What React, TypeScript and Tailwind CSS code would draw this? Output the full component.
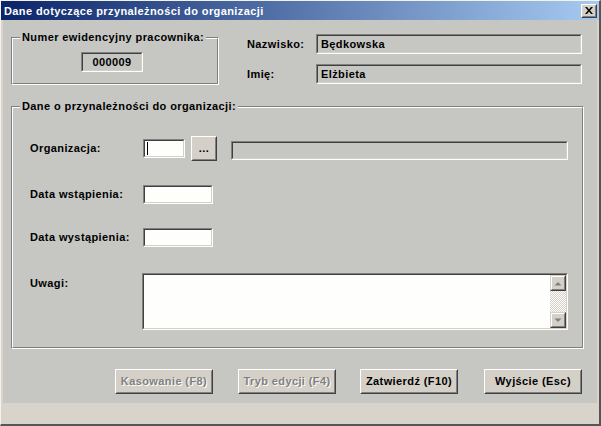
import React from "react";

const FONT = "font-['Liberation_Sans',Arial,sans-serif] font-bold text-[11px] tracking-[0.4px]";

function Sunken({
  w,
  h,
  bg = "bg-[#fefefc]",
  className = "",
  children,
}: {
  w: string;
  h: string;
  bg?: string;
  className?: string;
  children?: React.ReactNode;
}) {
  return (
    <div
      className={`${w} ${h} ${className} shrink-0 border border-t-[#808080] border-l-[#808080] border-b-[#ffffff] border-r-[#ffffff]`}
    >
      <div
        className={`w-full h-full border border-t-[#404040] border-l-[#404040] border-b-[#d4d0c8] border-r-[#d4d0c8] ${bg} flex items-center`}
      >
        {children}
      </div>
    </div>
  );
}

function Etched({
  w,
  h,
  legend,
  legendLeft,
  className = "",
  children,
}: {
  w: string;
  h: string;
  legend: string;
  legendLeft: string;
  className?: string;
  children?: React.ReactNode;
}) {
  return (
    <div
      className={`${w} ${h} ${className} relative shrink-0 border border-t-[#808080] border-l-[#808080] border-b-[#ffffff] border-r-[#ffffff]`}
    >
      <div className="w-full h-full border border-t-[#ffffff] border-l-[#ffffff] border-b-[#808080] border-r-[#808080]">
        {children}
      </div>
      <span
        className={`absolute ${legendLeft} top-[-8px] px-[2px] bg-[#c6c7c3] leading-[14px] text-black`}
      >
        {legend}
      </span>
    </div>
  );
}

function Button({
  w,
  label,
  disabled = false,
}: {
  w: string;
  label: string;
  disabled?: boolean;
}) {
  return (
    <div
      className={`${w} h-[25px] shrink-0 border border-t-[#ffffff] border-l-[#ffffff] border-b-[#404040] border-r-[#404040]`}
    >
      <div className="w-full h-full border border-t-[#d4d0c8] border-l-[#d4d0c8] border-b-[#808080] border-r-[#808080] bg-[#d4d0c8] flex items-center justify-center">
        <span
          className={
            disabled
              ? "text-[#808080] [text-shadow:1px_1px_0_#ffffff]"
              : "text-black"
          }
        >
          {label}
        </span>
      </div>
    </div>
  );
}

function ArrowBtn({ up }: { up: boolean }) {
  return (
    <div className="w-[16px] h-[16px] border border-t-[#d4d0c8] border-l-[#d4d0c8] border-b-[#404040] border-r-[#404040]">
      <div className="w-full h-full border border-t-[#ffffff] border-l-[#ffffff] border-b-[#808080] border-r-[#808080] bg-[#d4d0c8] flex items-center justify-center">
        <svg width="8" height="5" viewBox="0 0 8 5">
          {up ? (
            <polygon points="0.5,4.5 7.5,4.5 4,1" fill="#808080" />
          ) : (
            <polygon points="0.5,0.5 7.5,0.5 4,4" fill="#808080" />
          )}
        </svg>
      </div>
    </div>
  );
}

export default function App() {
  return (
    <div
      className={`${FONT} w-[601px] h-[426px] flex flex-col bg-[#d8d4cc] border-l border-t border-l-[#f4f2ec] border-t-[#f4f2ec] border-r-2 border-b-2 border-r-[#555555] border-b-[#555555] overflow-hidden`}
    >
      {/* Title bar */}
      <div className="h-[19px] shrink-0 flex items-center bg-[linear-gradient(to_right,#0a246a,#a6caf0)]">
        <span className="ml-[3px] text-white leading-[14px]">
          Dane dotyczące przynależności do organizacji
        </span>
        <div className="ml-auto mr-[2px] w-[16px] h-[14px] border border-t-[#ffffff] border-l-[#ffffff] border-b-[#404040] border-r-[#404040]">
          <div className="w-full h-full bg-[#d4d0c8] border border-t-[#d4d0c8] border-l-[#d4d0c8] border-b-[#808080] border-r-[#808080] flex items-center justify-center">
            <svg width="8" height="7" viewBox="0 0 8 7">
              <path d="M0 0 L2 0 L4 2.5 L6 0 L8 0 L5 3.5 L8 7 L6 7 L4 4.5 L2 7 L0 7 L3 3.5 Z" fill="#000" />
            </svg>
          </div>
        </div>
      </div>

      {/* Client area */}
      <div className="ml-[2px] w-[594px] h-[383px] shrink-0 bg-[#c6c7c3] flex flex-col">
        {/* Top section */}
        <div className="h-[86px] shrink-0 flex items-start">
          <Etched
            w="w-[208px]"
            h="h-[48px]"
            legend="Numer ewidencyjny pracownika:"
            legendLeft="left-[8px]"
            className="ml-[8px] mt-[17px]"
          >
            <div className="pt-[13px] pl-[68px]">
              <Sunken w="w-[62px]" h="h-[20px]" bg="bg-[#c6c7c3]">
                <span className="w-full text-center text-black leading-[14px]">000009</span>
              </Sunken>
            </div>
          </Etched>
          <div className="ml-[28px] mt-[14px] flex flex-col">
            <div className="flex items-center h-[20px]">
              <span className="w-[69px] text-black">Nazwisko:</span>
              <Sunken w="w-[266px]" h="h-[20px]" bg="bg-[#c6c7c3]">
                <span className="pl-[3px] text-black">Będkowska</span>
              </Sunken>
            </div>
            <div className="flex items-center h-[20px] mt-[10px]">
              <span className="w-[69px] text-black">Imię:</span>
              <Sunken w="w-[266px]" h="h-[20px]" bg="bg-[#c6c7c3]">
                <span className="pl-[3px] text-black">Elżbieta</span>
              </Sunken>
            </div>
          </div>
        </div>

        {/* Group 2 */}
        <Etched
          w="w-[573px]"
          h="h-[243px]"
          legend="Dane o przynależności do organizacji:"
          legendLeft="left-[8px]"
          className="ml-[8px]"
        >
          <div className="flex flex-col pl-[17px] text-black">
            <div className="mt-[28px] h-[25px] flex items-start">
              <span className="w-[113px] mt-[5px] leading-[14px]">Organizacja:</span>
              <Sunken w="w-[42px]" h="h-[19px]" className="mt-[3px]">
                <div className="ml-[2px] w-[1px] h-[13px] bg-black" />
              </Sunken>
              <div className="ml-[6px]">
                <Button w="w-[26px]" label="..." />
              </div>
              <Sunken w="w-[337px]" h="h-[19px]" bg="bg-[#c6c7c3]" className="ml-[14px] mt-[5px]" />
            </div>
            <div className="mt-[24px] h-[19px] flex items-center">
              <span className="w-[113px]">Data wstąpienia:</span>
              <Sunken w="w-[70px]" h="h-[19px]" />
            </div>
            <div className="mt-[24px] h-[19px] flex items-center">
              <span className="w-[113px]">Data wystąpienia:</span>
              <Sunken w="w-[70px]" h="h-[19px]" />
            </div>
            <div className="mt-[26px] h-[57px] flex items-start">
              <span className="w-[112px] mt-[3px] leading-[14px]">Uwagi:</span>
              <Sunken w="w-[426px]" h="h-[57px]">
                <div className="w-full h-full flex justify-end">
                  <div className="w-[16px] h-full flex flex-col bg-[repeating-conic-gradient(#ffffff_0_25%,#d4d0c8_0_50%)] bg-[length:2px_2px]">
                    <ArrowBtn up />
                    <div className="flex-1" />
                    <ArrowBtn up={false} />
                  </div>
                </div>
              </Sunken>
            </div>
          </div>
        </Etched>

        {/* Buttons */}
        <div className="mt-[20px] flex items-start">
          <div className="ml-[112px]">
            <Button w="w-[98px]" label="Kasowanie (F8)" disabled />
          </div>
          <div className="ml-[25px]">
            <Button w="w-[98px]" label="Tryb edycji (F4)" disabled />
          </div>
          <div className="ml-[24px]">
            <Button w="w-[98px]" label="Zatwierdź (F10)" />
          </div>
          <div className="ml-[26px]">
            <Button w="w-[98px]" label="Wyjście (Esc)" />
          </div>
        </div>
      </div>

      {/* Bottom strip */}
      <div className="flex-1 bg-[#d8d4cc]" />
    </div>
  );
}
